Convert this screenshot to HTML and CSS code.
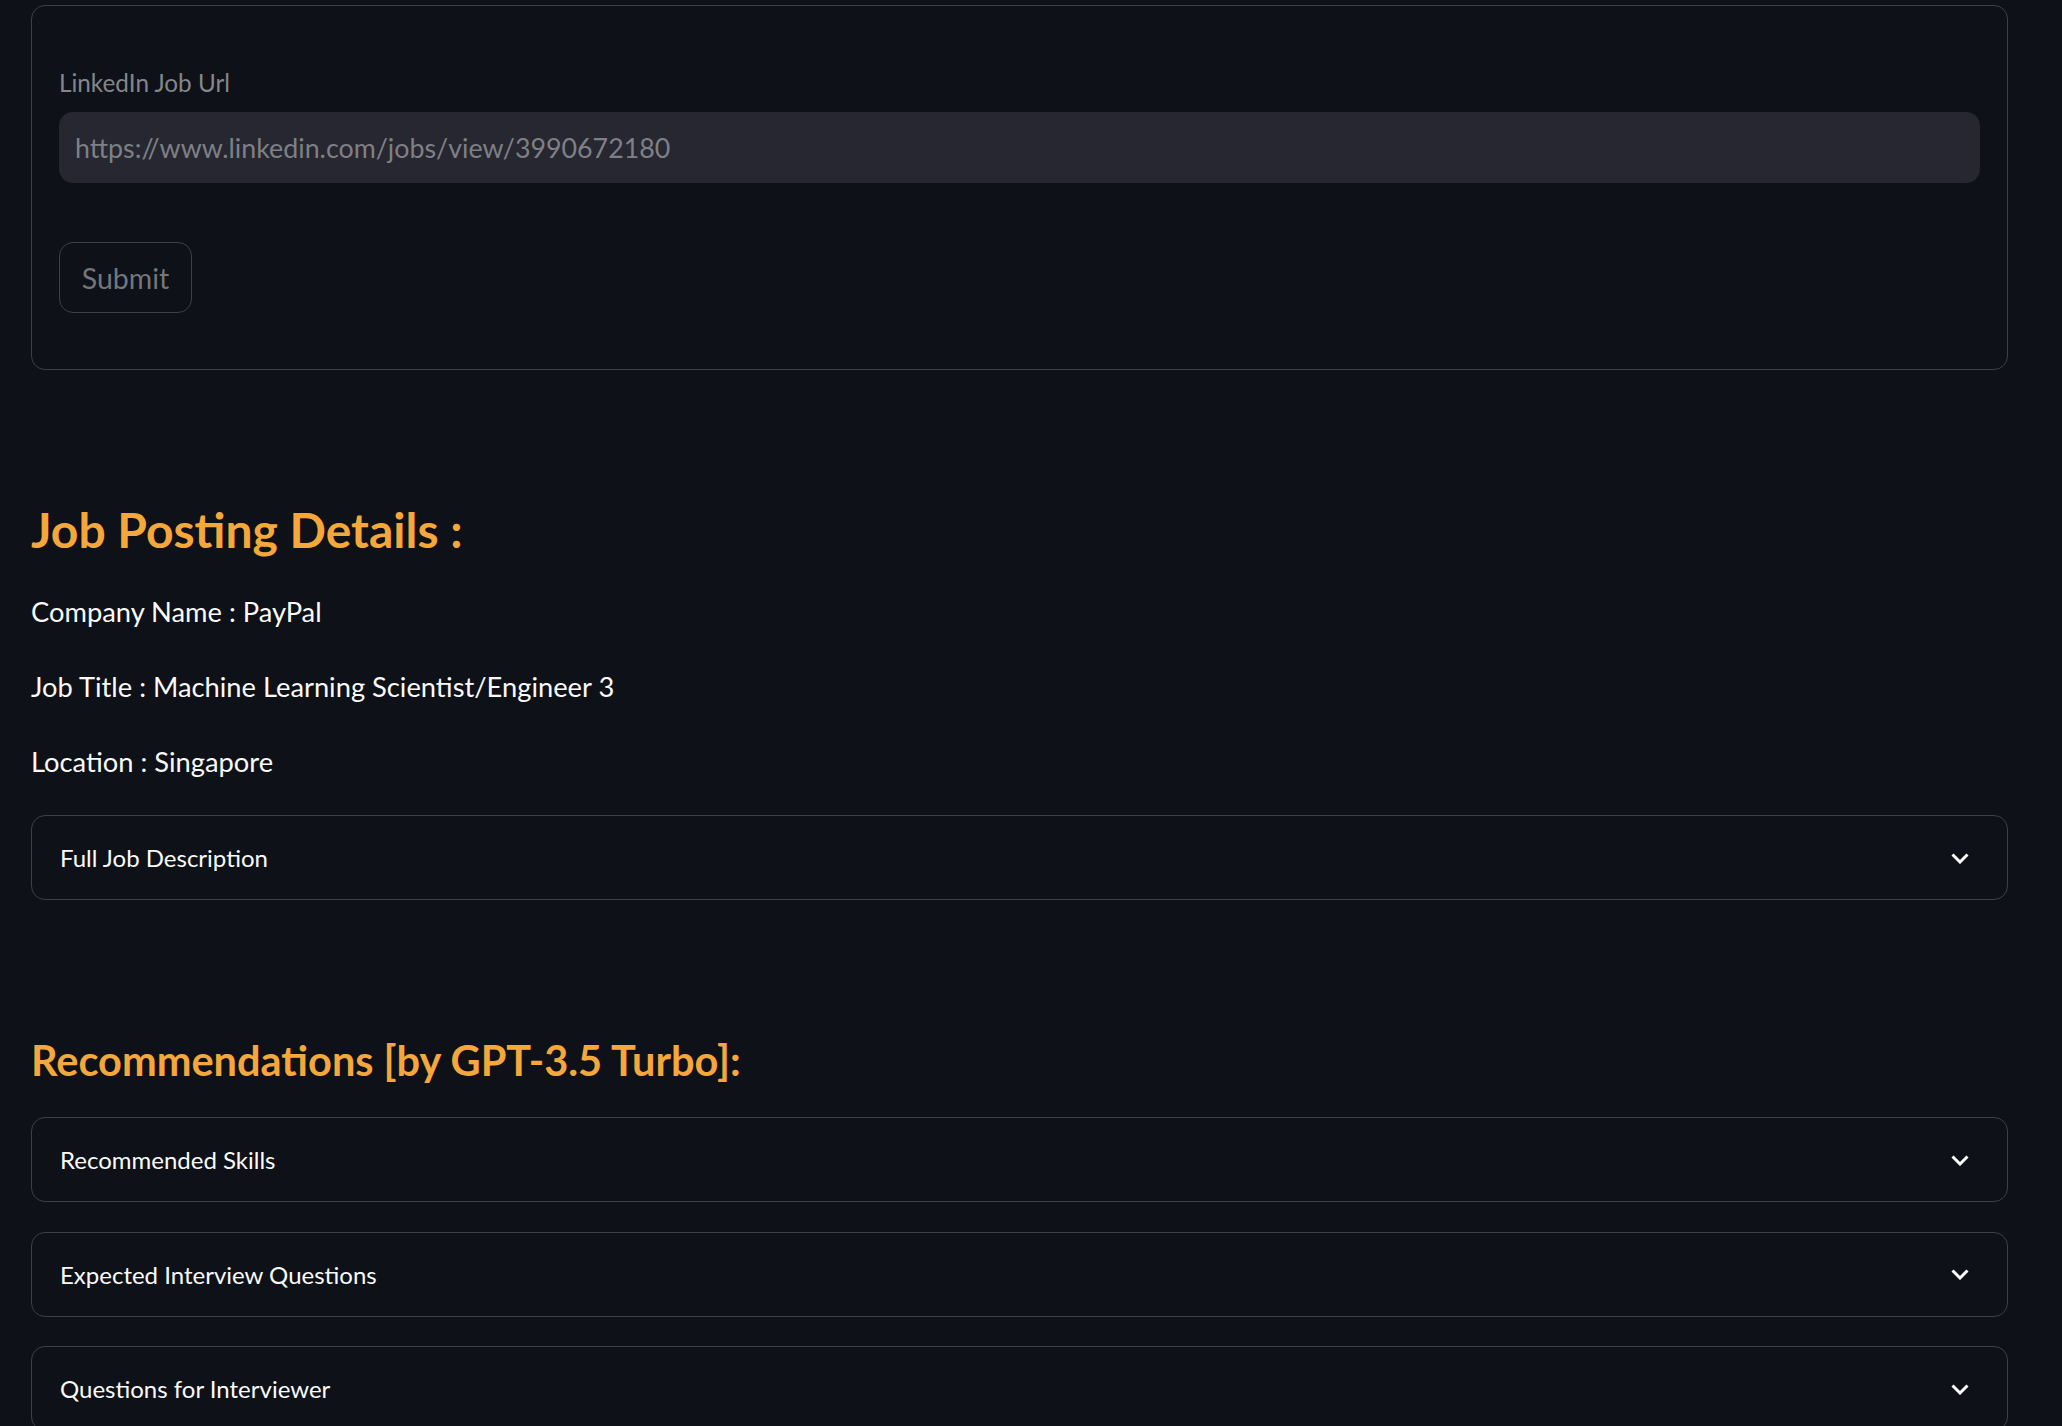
FILE: index.html
```html
<!DOCTYPE html>
<html lang="en">
<head>
<meta charset="utf-8">
<title>Job Posting</title>
<link rel="stylesheet" href="styles.css">
</head>
<body>
<main class="page">
  <form class="form-box">
    <label class="field-label" for="url">LinkedIn Job Url</label>
    <div class="text-input" id="url">https://www.linkedin.com/jobs/view/3990672180</div>
    <button type="button" class="submit-btn">Submit</button>
  </form>

  <h3 class="section-title first">Job Posting Details :</h3>
  <p class="detail first-detail">Company Name : PayPal</p>
  <p class="detail">Job Title : Machine Learning Scientist/Engineer 3</p>
  <p class="detail">Location : Singapore</p>

  <div class="expander exp-first">
    <span class="exp-title">Full Job Description</span>
    <svg class="chev" width="18" height="11" viewBox="0 0 18 11"><polyline points="1.5,1.5 9,9 16.5,1.5" fill="none" stroke="#fafafa" stroke-width="3"/></svg>
  </div>

  <h3 class="section-title second">Recommendations [by GPT-3.5 Turbo]:</h3>

  <div class="expander exp-rec">
    <span class="exp-title">Recommended Skills</span>
    <svg class="chev" width="18" height="11" viewBox="0 0 18 11"><polyline points="1.5,1.5 9,9 16.5,1.5" fill="none" stroke="#fafafa" stroke-width="3"/></svg>
  </div>
  <div class="expander exp-next">
    <span class="exp-title">Expected Interview Questions</span>
    <svg class="chev" width="18" height="11" viewBox="0 0 18 11"><polyline points="1.5,1.5 9,9 16.5,1.5" fill="none" stroke="#fafafa" stroke-width="3"/></svg>
  </div>
  <div class="expander exp-next">
    <span class="exp-title">Questions for Interviewer</span>
    <svg class="chev" width="18" height="11" viewBox="0 0 18 11"><polyline points="1.5,1.5 9,9 16.5,1.5" fill="none" stroke="#fafafa" stroke-width="3"/></svg>
  </div>
</main>
</body>
</html>
```
FILE: styles.css
```css
html, body {
  margin: 0;
  padding: 0;
  background: #0e1117;
  height: 100%;
  overflow: hidden;
}
body {
  font-family: Lato, "Noto Sans", sans-serif;
  color: #fafafa;
}
.page {
  padding: 5px 54px 0 31px;
  display: flex;
  flex-direction: column;
}
.form-box {
  margin: 0;
  border: 1px solid #3d4045;
  border-radius: 14px;
  padding: 62px 27px 56px 27px;
  display: flex;
  flex-direction: column;
  align-items: flex-start;
}
.field-label {
  display: block;
  font-size: 24.3px;
  line-height: 30px;
  height: 30px;
  color: #84868c;
}
.text-input {
  margin-top: 14px;
  align-self: stretch;
  height: 71px;
  box-sizing: border-box;
  background: #262730;
  border-radius: 14px;
  padding-left: 16px;
  display: flex;
  align-items: center;
  font-size: 26.8px;
  color: #7e8086;
}
.submit-btn {
  margin-top: 59px;
  width: 133px;
  height: 71px;
  box-sizing: border-box;
  background: transparent;
  border: 1px solid #3d4045;
  border-radius: 14px;
  font-family: Lato, "Noto Sans", sans-serif;
  font-size: 28.5px;
  color: #74767c;
  padding: 0;
}
.section-title {
  margin: 0;
  line-height: 60px;
  height: 60px;
  font-weight: 700;
  color: #f4a73a;
}
.section-title.first {
  margin-top: 130px;
  font-size: 48px;
}
.section-title.second {
  margin-top: 130px;
  font-size: 41.5px;
}
.detail {
  margin: 39px 0 0 0;
  font-size: 27.3px;
  line-height: 36px;
  height: 36px;
}
.detail.first-detail { margin-top: 34px; }
.expander {
  height: 85px;
  box-sizing: border-box;
  border: 1px solid #3d4045;
  border-radius: 14px;
  padding: 1px 38px 0 28px;
  display: flex;
  align-items: center;
  justify-content: space-between;
}
.exp-first { margin-top: 35px; }
.exp-rec { margin-top: 27px; }
.exp-next { margin-top: 29.5px; }
.exp-title {
  font-size: 24px;
  line-height: 30px;
}
.chev { display: block; }
```
